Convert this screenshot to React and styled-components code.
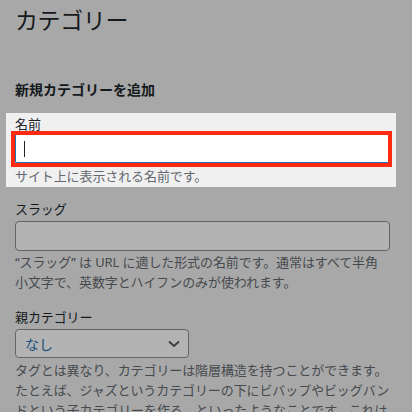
import React from "react";
import styled, { createGlobalStyle } from "styled-components";

const GlobalStyle = createGlobalStyle`
  html, body {
    margin: 0;
    padding: 0;
    background: #a8a8a8;
    overflow: hidden;
  }
  body {
    font-family: "Noto Sans", "Noto Sans CJK JP", sans-serif;
    color: #14191b;
  }
`;

const Page = styled.div`
  width: 412px;
  height: 412px;
  box-sizing: border-box;
  padding: 5px 22px 0 15px;
  overflow: hidden;
`;

const Title = styled.h1`
  margin: 0;
  font-size: 23px;
  line-height: 30px;
  font-weight: 400;
  letter-spacing: -0.4px;
  color: #14191b;
`;

const SectionTitle = styled.h2`
  margin: 45px 0 0;
  font-size: 14px;
  line-height: 20px;
  font-weight: 700;
  color: #14191b;
`;

const Field = styled.div`
  display: flex;
  flex-direction: column;
  margin-top: ${(p) => p.$top || 0}px;
`;

const Highlight = styled.div`
  display: flex;
  flex-direction: column;
  margin: 13px -6px 0 -9px;
  padding: 3px 6px 1px 9px;
  background: #f0f0f1;
`;

const Label = styled.label`
  font-size: 13px;
  line-height: ${(p) => (p.$tight ? 16 : 18)}px;
  letter-spacing: -0.1px;
  color: ${(p) => (p.$lit ? "#1d2327" : "#14191b")};
  margin-bottom: ${(p) => (p.$tight ? 0 : 3)}px;
`;

const Spotlight = styled.div`
  margin: -1px 0 0 -4px;
  width: 381px;
  height: 36px;
  box-sizing: border-box;
  border: 4px solid #ff2a12;
  display: flex;
`;

const FocusedInput = styled.div`
  flex: 1;
  display: flex;
  align-items: center;
  padding-left: 8px;
  background: #ffffff;
  border-bottom: 1px solid #2271b1;
  border-left: 1px solid #2271b1;
  border-bottom-left-radius: 2px;
`;

const Caret = styled.span`
  display: block;
  width: 1px;
  height: 16px;
  background: #1d2327;
`;

const TextBox = styled.div`
  height: 30px;
  box-sizing: border-box;
  border: 1px solid #626468;
  border-radius: 4px;
  background: #b3b3b3;
`;

const Select = styled.div`
  width: 174px;
  height: 29px;
  box-sizing: border-box;
  border: 1px solid #626468;
  border-radius: 4px;
  background: #b3b3b3;
  display: flex;
  align-items: center;
  justify-content: space-between;
  padding: 0 8px 0 9px;
  font-size: 14px;
  color: #184f7c;
`;

const Description = styled.p`
  margin: ${(p) => (p.$top != null ? p.$top : 1)}px 0 0;
  font-size: 13px;
  line-height: 20px;
  letter-spacing: -0.1px;
  color: ${(p) => (p.$lit ? "#646970" : "#464a4e")};
`;

const Chevron = () => (
  <svg width="12" height="8" viewBox="0 0 12 8" aria-hidden="true">
    <path d="M1 1.5 L6 6 L11 1.5" fill="none" stroke="#3a3c3e" strokeWidth="1.8" />
  </svg>
);

export default function App() {
  return (
    <>
      <GlobalStyle />
      <Page>
        <Title>カテゴリー</Title>
        <SectionTitle>新規カテゴリーを追加</SectionTitle>

        <Highlight>
          <Label $tight $lit>名前</Label>
          <Spotlight>
            <FocusedInput>
              <Caret />
            </FocusedInput>
          </Spotlight>
          <Description $lit $top={-1}>サイト上に表示される名前です。</Description>
        </Highlight>

        <Field $top={13}>
          <Label>スラッグ</Label>
          <TextBox />
          <Description>
            “スラッグ” は URL に適した形式の名前です。通常はすべて半角小文字で、英数字とハイフンのみが使われます。
          </Description>
        </Field>

        <Field $top={16}>
          <Label>親カテゴリー</Label>
          <Select>
            <span>なし</span>
            <Chevron />
          </Select>
          <Description $top={2}>
            タグとは異なり、カテゴリーは階層構造を持つことができます。
            <br />
            たとえば、ジャズというカテゴリーの下にビバップやビッグバン
            <br />
            ドという子カテゴリーを作る、といったようなことです。これは任意です。
          </Description>
        </Field>
      </Page>
    </>
  );
}
